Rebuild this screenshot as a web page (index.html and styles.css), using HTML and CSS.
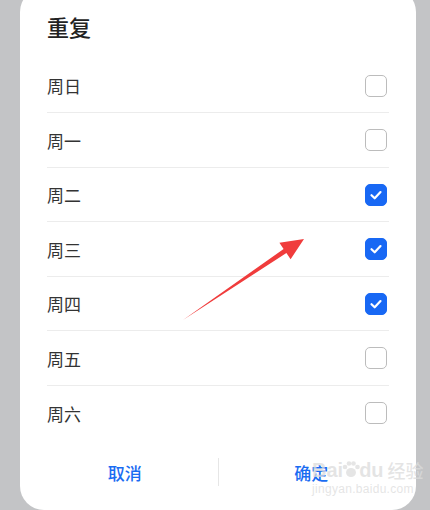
FILE: index.html
```html
<!DOCTYPE html>
<html lang="zh">
<head>
<meta charset="utf-8">
<link rel="stylesheet" href="styles.css">
</head>
<body>
<div class="card">
  <div class="title">重复</div>
  <div class="list">
    <div class="row"><span>周日</span><span class="box"></span></div>
    <div class="row"><span>周一</span><span class="box"></span></div>
    <div class="row"><span>周二</span><span class="box on"><svg viewBox="0 0 22 22"><path d="M6.5 11.2l3.2 3.1 5.8-6.2"/></svg></span></div>
    <div class="row"><span>周三</span><span class="box on"><svg viewBox="0 0 22 22"><path d="M6.5 11.2l3.2 3.1 5.8-6.2"/></svg></span></div>
    <div class="row"><span>周四</span><span class="box on"><svg viewBox="0 0 22 22"><path d="M6.5 11.2l3.2 3.1 5.8-6.2"/></svg></span></div>
    <div class="row"><span>周五</span><span class="box"></span></div>
    <div class="row last"><span>周六</span><span class="box"></span></div>
  </div>
  <div class="actions">
    <button class="btn">取消</button>
    <span class="vsep"></span>
    <button class="btn">确定</button>
  </div>
</div>
<svg class="arrow" width="430" height="510" viewBox="0 0 430 510">
  <polygon points="183,320 283.6,248.9 279.4,242.7 304,239 290.6,259.3 286.4,253.1" fill="#f03c3c"/>
</svg>
<div class="watermark">
  <div class="wm-top"><span class="wm-bai">Bai</span><svg class="wm-paw" viewBox="0 0 20 20"><ellipse cx="10" cy="13.5" rx="5" ry="4.5"/><circle cx="4" cy="8" r="2.3"/><circle cx="8" cy="4.5" r="2.3"/><circle cx="12.5" cy="4.5" r="2.3"/><circle cx="16.5" cy="8" r="2.3"/></svg><span class="wm-bai">du</span><span class="wm-jy">经验</span></div>
  <div class="wm-url">jingyan.baidu.com</div>
</div>
</body>
</html>
```
FILE: styles.css
```css
html, body {
  margin: 0;
  padding: 0;
}
body {
  width: 430px;
  height: 510px;
  overflow: hidden;
  background: #c3c4c6;
  font-family: "Noto Sans CJK SC", "Noto Sans", sans-serif;
  position: relative;
}
.card {
  margin: -12px 0 0 20px;
  width: 396px;
  height: 522px;
  background: #fff;
  border-radius: 24px;
  box-sizing: border-box;
  padding: 23px 27px 0 27px;
  display: flex;
  flex-direction: column;
}
.title {
  font-size: 22px;
  line-height: 30px;
  font-weight: 500;
  color: #222;
  height: 47.5px;
}
.list {
  display: flex;
  flex-direction: column;
}
.row {
  height: 54.5px;
  box-sizing: border-box;
  border-bottom: 1px solid #ececec;
  display: flex;
  align-items: center;
  justify-content: space-between;
  font-size: 17px;
  color: #333;
  padding-top: 1px;
  padding-right: 2px;
}
.row.last {
  border-bottom: none;
}
.box {
  width: 22px;
  height: 22px;
  box-sizing: border-box;
  border: 1.5px solid #bcbcbc;
  border-radius: 5px;
  display: flex;
  align-items: center;
  justify-content: center;
}
.box.on {
  background: #1868f4;
  border-color: #1868f4;
}
.box svg {
  width: 22px;
  height: 22px;
  flex: none;
}
.box svg path {
  fill: none;
  stroke: #fff;
  stroke-width: 2.2;
  stroke-linecap: round;
  stroke-linejoin: round;
}
.actions {
  margin: 12px -15px 0 -15px;
  height: 40px;
  display: flex;
  align-items: center;
}
.btn {
  flex: 1;
  border: none;
  background: none;
  font-family: inherit;
  font-size: 17px;
  font-weight: 500;
  color: #1a6cf2;
  padding: 0;
  height: 40px;
}
.vsep {
  width: 1px;
  height: 28px;
  background: #e6e6e6;
}
.arrow {
  position: absolute;
  left: 0;
  top: 0;
  pointer-events: none;
}
.watermark {
  position: absolute;
  left: 312px;
  top: 458px;
  color: rgba(220, 220, 220, 0.75);
  font-family: "Liberation Sans", sans-serif;
  pointer-events: none;
}
.wm-top {
  display: flex;
  align-items: flex-end;
  font-size: 20px;
  line-height: 24px;
  font-weight: bold;
}
.wm-paw {
  width: 20px;
  height: 20px;
  margin: 0 -2px 3px -2px;
  fill: rgba(220, 220, 220, 0.75);
}
.wm-jy {
  font-family: "Noto Sans CJK SC", sans-serif;
  font-size: 18px;
  font-weight: 500;
  margin-left: 4px;
}
.wm-url {
  font-size: 12px;
  line-height: 15px;
  letter-spacing: 0.3px;
}
```
